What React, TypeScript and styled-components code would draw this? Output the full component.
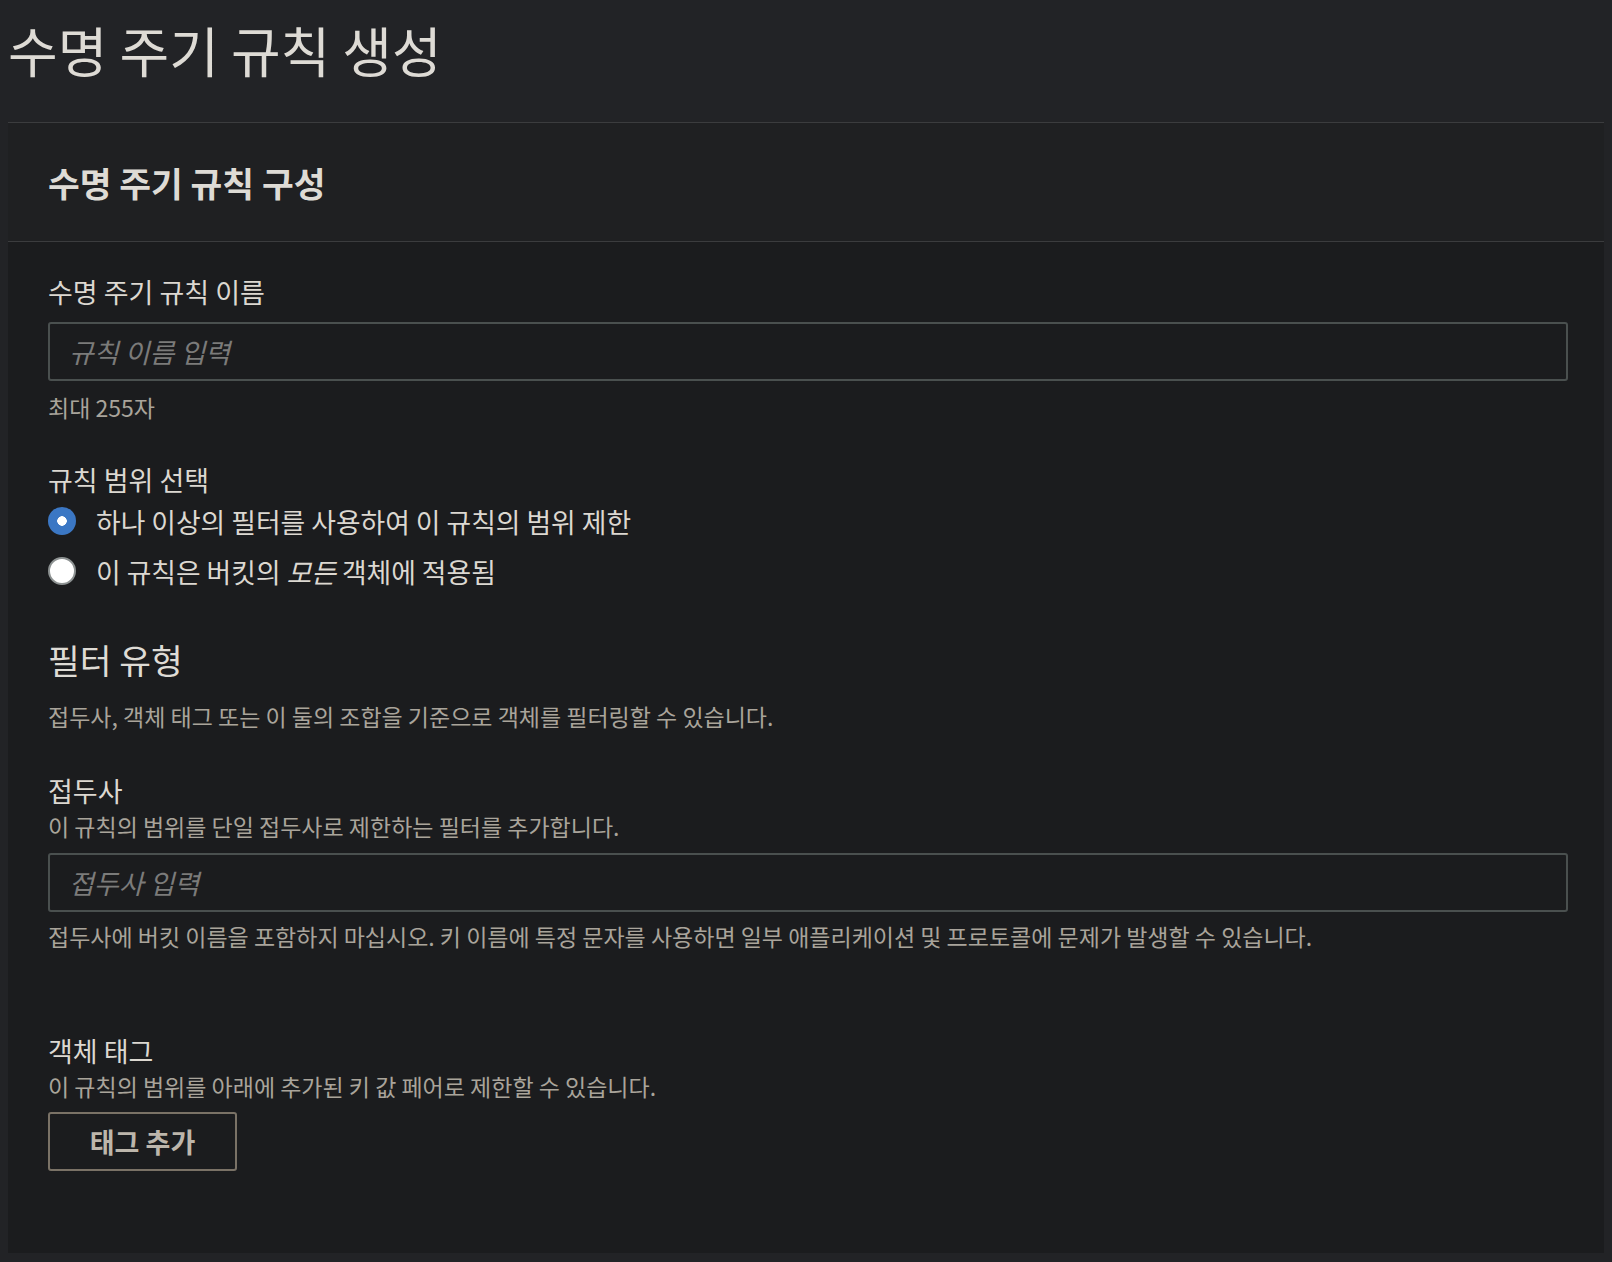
import * as React from 'react';
import styled, { createGlobalStyle } from 'styled-components';

const GlobalStyle = createGlobalStyle`
  html, body {
    background: #222326;
  }
  body {
    margin: 8px;
    font-family: "Noto Sans CJK KR", "Noto Sans", sans-serif;
    color: #dcd8d1;
  }
`;

const Page = styled.div`
  width: 1600px;
`;

const PageTitle = styled.h1`
  margin: 0;
  padding: 13px 0 43px;
  font-size: 54px;
  line-height: 58px;
  font-weight: 400;
  color: #dedbd5;
`;

const Card = styled.section`
  background: #1b1c1e;
  border-top: 1px solid #3b3c3e;
`;

const CardHeader = styled.header`
  background: #1f2022;
  padding: 36px 40px;
  border-bottom: 1px solid #3b3c3e;
`;

const CardTitle = styled.h2`
  margin: 0;
  font-size: 34.5px;
  line-height: 46px;
  font-weight: 700;
  color: #dedbd5;
`;

const CardBody = styled.div`
  padding: 32px 40px 82px;
  display: flex;
  flex-direction: column;
`;

const Label = styled.label<{ $top?: number }>`
  display: block;
  margin-top: ${(p) => p.$top ?? 0}px;
  font-size: 27px;
  line-height: 36px;
  color: #dcd8d1;
`;

const SectionTitle = styled.h3`
  margin: 40px 0 0;
  font-size: 34.5px;
  line-height: 46px;
  font-weight: 400;
  color: #dedbd5;
`;

const Hint = styled.p<{ $top?: number }>`
  margin: ${(p) => p.$top ?? 0}px 0 0;
  font-size: 23px;
  line-height: 30px;
  color: #a9a49b;
`;

const TextInput = styled.input`
  box-sizing: border-box;
  margin-top: 12px;
  width: 100%;
  height: 59px;
  padding: 0 19px;
  background: #1b1c1e;
  border: 2px solid #4a504f;
  border-radius: 3px;
  font-family: inherit;
  font-size: 27px;
  color: #dcd8d1;
  outline: none;

  &::placeholder {
    color: #7b7b7a;
    font-style: italic;
  }
`;

const RadioGroup = styled.div`
  display: flex;
  flex-direction: column;
  margin-top: -2px;
`;

const RadioRow = styled.label`
  display: flex;
  align-items: center;
  gap: 20px;
  height: 50px;
  font-size: 26.8px;
  color: #dcd8d1;
  cursor: pointer;
`;

const RadioDot = styled.input.attrs({ type: 'radio' })`
  appearance: none;
  margin: 0;
  width: 28px;
  height: 28px;
  border-radius: 50%;
  flex-shrink: 0;
  box-sizing: border-box;
  background: #ffffff;
  border: 2px solid #8d9292;

  &:checked {
    border: none;
    background: radial-gradient(circle, #ffffff 0 4.5px, #3b77c4 5px);
  }
`;

const Em = styled.em`
  font-style: italic;
`;

const SmallLabel = styled(Label)`
  line-height: 33px;
`;

const OutlineButton = styled.button`
  margin-top: 11px;
  align-self: flex-start;
  width: 189px;
  height: 59px;
  background: transparent;
  border: 2px solid #7a7266;
  border-radius: 3px;
  font-family: inherit;
  font-size: 27px;
  font-weight: 700;
  color: #bdb6ab;
  cursor: pointer;
`;

const App = () => {
  const [scope, setScope] = React.useState<'filter' | 'all'>('filter');

  return (
    <Page>
      <GlobalStyle />
      <PageTitle>수명 주기 규칙 생성</PageTitle>
      <Card>
        <CardHeader>
          <CardTitle>수명 주기 규칙 구성</CardTitle>
        </CardHeader>
        <CardBody>
          <Label htmlFor="rule-name">수명 주기 규칙 이름</Label>
          <TextInput id="rule-name" placeholder="규칙 이름 입력" />
          <Hint $top={11}>최대 255자</Hint>

          <Label $top={40}>규칙 범위 선택</Label>
          <RadioGroup>
            <RadioRow>
              <RadioDot
                name="scope"
                checked={scope === 'filter'}
                onChange={() => setScope('filter')}
              />
              하나 이상의 필터를 사용하여 이 규칙의 범위 제한
            </RadioRow>
            <RadioRow>
              <RadioDot
                name="scope"
                checked={scope === 'all'}
                onChange={() => setScope('all')}
              />
              <span>
                이 규칙은 버킷의 <Em>모든</Em> 객체에 적용됨
              </span>
            </RadioRow>
          </RadioGroup>

          <SectionTitle>필터 유형</SectionTitle>
          <Hint $top={19}>접두사, 객체 태그 또는 이 둘의 조합을 기준으로 객체를 필터링할 수 있습니다.</Hint>

          <SmallLabel $top={43} htmlFor="prefix">접두사</SmallLabel>
          <Hint $top={4}>이 규칙의 범위를 단일 접두사로 제한하는 필터를 추가합니다.</Hint>
          <TextInput id="prefix" placeholder="접두사 입력" />
          <Hint $top={9}>
            접두사에 버킷 이름을 포함하지 마십시오. 키 이름에 특정 문자를 사용하면 일부 애플리케이션 및 프로토콜에 문제가 발생할 수 있습니다.
          </Hint>

          <SmallLabel $top={83}>객체 태그</SmallLabel>
          <Hint $top={4}>이 규칙의 범위를 아래에 추가된 키 값 페어로 제한할 수 있습니다.</Hint>
          <OutlineButton>태그 추가</OutlineButton>
        </CardBody>
      </Card>
    </Page>
  );
};

export default App;
